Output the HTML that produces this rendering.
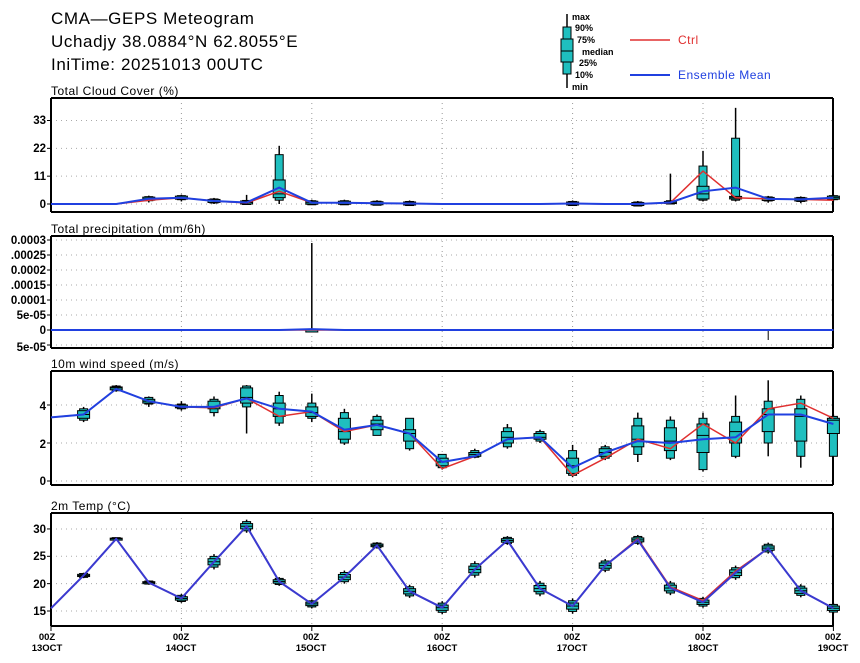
<!DOCTYPE html>
<html><head><meta charset="utf-8"><style>
html,body{margin:0;padding:0;background:#fff;}
svg{display:block;font-family:"Liberation Sans","DejaVu Sans",sans-serif;}
.t{font-size:17px;fill:#000;letter-spacing:0.6px;}
.s{font-size:12px;fill:#000;letter-spacing:0.5px;}
.a{font-size:11.5px;fill:#000;font-weight:bold;}
.l{font-size:9px;fill:#000;font-weight:bold;}
</style></head><body>
<svg id="g" width="860" height="663" viewBox="0 0 860 663" xmlns="http://www.w3.org/2000/svg">
<rect width="860" height="663" fill="#fff"/>
<text class="t" x="51" y="24">CMA—GEPS Meteogram</text>
<text class="t" x="51" y="47">Uchadjy 38.0884°N 62.8055°E</text>
<text class="t" x="51" y="70">IniTime: 20251013 00UTC</text>
<line x1="567" y1="14" x2="567" y2="88" stroke="#000" stroke-width="1.5"/>
<rect x="563" y="27" width="8" height="47" fill="#1fbfbf" stroke="#000"/>
<rect x="561" y="39" width="12" height="23" fill="#1fbfbf" stroke="#000"/>
<line x1="561" y1="51" x2="573" y2="51" stroke="#000"/>
<text class="l" x="572" y="20">max</text>
<text class="l" x="575" y="31">90%</text>
<text class="l" x="577" y="43">75%</text>
<text class="l" x="582" y="55">median</text>
<text class="l" x="579" y="66">25%</text>
<text class="l" x="575" y="78">10%</text>
<text class="l" x="572" y="90">min</text>
<line x1="630" y1="40" x2="670" y2="40" stroke="#e03030" stroke-width="1.5"/>
<text x="678" y="44" style="font-size:12px;fill:#e03030;letter-spacing:0.5px">Ctrl</text>
<line x1="630" y1="75" x2="670" y2="75" stroke="#2040e0" stroke-width="2"/>
<text x="678" y="79" style="font-size:12px;fill:#2040e0;letter-spacing:0.5px">Ensemble Mean</text>
<text class="s" x="51" y="95">Total Cloud Cover (%)</text>
<text class="s" x="51" y="233">Total precipitation (mm/6h)</text>
<text class="s" x="51" y="368">10m wind speed (m/s)</text>
<text class="s" x="51" y="510">2m Temp (°C)</text>
<g class="a" text-anchor="end">
<text x="46" y="124">33</text><text x="46" y="152">22</text><text x="46" y="180">11</text><text x="46" y="208">0</text>
<text x="46" y="244">0.0003</text><text x="46" y="259">.00025</text><text x="46" y="274">0.0002</text><text x="46" y="289">.00015</text><text x="46" y="304">0.0001</text><text x="46" y="319">5e-05</text><text x="46" y="334">0</text><text x="46" y="351">5e-05</text>
<text x="46" y="410">4</text><text x="46" y="448">2</text><text x="46" y="485">0</text>
<text x="46" y="533">30</text><text x="46" y="560">25</text><text x="46" y="588">20</text><text x="46" y="615">15</text>
</g>
<g class="l" text-anchor="middle" style="font-size:9.5px">
<text x="47" y="640">00Z</text><text x="47" y="651">13OCT</text>
<text x="181" y="640">00Z</text><text x="181" y="651">14OCT</text>
<text x="311" y="640">00Z</text><text x="311" y="651">15OCT</text>
<text x="442" y="640">00Z</text><text x="442" y="651">16OCT</text>
<text x="572" y="640">00Z</text><text x="572" y="651">17OCT</text>
<text x="703" y="640">00Z</text><text x="703" y="651">18OCT</text>
<text x="833" y="640">00Z</text><text x="833" y="651">19OCT</text>
</g>
<g id="dyn"></g>
</svg>
<script>
var NS="http://www.w3.org/2000/svg",G=document.getElementById("dyn");
function el(n,a){var e=document.createElementNS(NS,n);for(var k in a)e.setAttribute(k,a[k]);G.appendChild(e);return e;}
function X(i){return 51+32.6*i;}
var P=[{t:98,b:212,f:function(v){return 204-2.53*v},g:[33,22,11,0]},
{t:236,b:348,f:function(v){return 330-300000*v},g:[0.0003,0.00025,0.0002,0.00015,0.0001,0.00005,0,-0.00005]},
{t:371,b:485,f:function(v){return 481-19*v},g:[4,2,0]},
{t:513,b:626,f:function(v){return 611-5.47*(v-15)},g:[30,25,20,15]}];
P.forEach(function(p){
 p.g.forEach(function(v){var y=p.f(v);el("line",{x1:51,x2:833,y1:y,y2:y,stroke:"#aaa","stroke-dasharray":"1,4"});el("line",{x1:47,x2:51,y1:y,y2:y,stroke:"#000"});});
 for(var d=1;d<6;d++)el("line",{x1:X(4*d),x2:X(4*d),y1:p.t,y2:p.b,stroke:"#999","stroke-dasharray":"1,4"});
 el("line",{x1:51,x2:51,y1:p.t,y2:p.b,stroke:"#000","stroke-width":2});
 el("line",{x1:833,x2:833,y1:p.t,y2:p.b,stroke:"#000","stroke-width":2});
 el("line",{x1:51,x2:833,y1:p.t,y2:p.t,stroke:"#000","stroke-width":2});
 el("line",{x1:51,x2:833,y1:p.b,y2:p.b,stroke:"#000","stroke-width":2});
});
for(var d=0;d<7;d++)el("line",{x1:X(4*d),x2:X(4*d),y1:626,y2:631,stroke:"#000"});
function box(p,i,b){var f=P[p].f,x=X(i);
 el("line",{x1:x,x2:x,y1:f(b[0]),y2:f(b[6]),stroke:"#000","stroke-width":1.5});
 var y1=f(b[5]),y2=f(b[1]);el("rect",{x:x-4,y:y1,width:8,height:Math.max(y2-y1,2),fill:"#1fbfbf",stroke:"#000"});
 y1=f(b[4]);y2=f(b[2]);el("rect",{x:x-6,y:y1,width:12,height:Math.max(y2-y1,2),fill:"#1fbfbf",stroke:"#000"});
 el("line",{x1:x-6,x2:x+6,y1:f(b[3]),y2:f(b[3]),stroke:"#000"});}
function line(p,v,c,w){var s="";v.forEach(function(a,i){s+=(i?"L":"M")+X(i).toFixed(1)+","+P[p].f(a).toFixed(1);});el("path",{d:s,fill:"none",stroke:c,"stroke-width":w});}
function sm(v,d){return [v-d,v-d*.7,v-d*.4,v,v+d*.4,v+d*.7,v+d];}
var cc=[0,0,0,1.5,2.5,1.2,0.4,5,0.5,0.5,0.3,0.2,0,0,0,0,0.2,0,0,0.5,13,2.5,2,1.8,1.5];
var cm=[0,0,0,2.1,2.5,1.2,0.6,6.5,0.5,0.5,0.3,0.2,0,0,0,0,0.2,0,0,0.6,5,6.5,2,1.8,2.5];
for(var i=3;i<25;i++){if(i==7)box(0,i,[0,1.5,2.5,4,9.5,19.5,23]);else if(i==19)box(0,i,[0,0,0.2,0.5,1,1.3,12]);else if(i==20)box(0,i,[1,1.5,2,4,7,15,21]);else if(i==21)box(0,i,[1,1.5,2,2.5,3,26,38]);else if(i>11&&i<19&&i!=16&&i!=18)continue;else box(0,i,[Math.max(0,cm[i]-1.5),cm[i]-0.8,cm[i]-0.6,cm[i],cm[i]+0.6,cm[i]+0.8,cm[i]+(i==6?3:1.2)]);}
line(0,cc,"#e03030",1.5);line(0,cm,"#2040e0",2);
box(1,8,[0,0,0,0,0,0,0.00029]);el("line",{x1:X(22),x2:X(22),y1:330,y2:340,stroke:"#000"});
var pz=[];for(i=0;i<25;i++)pz.push(0);var pm=pz.slice();pm[8]=0.000003;var pc=pz.slice();
line(1,pc,"#e03030",1.5);line(1,pm,"#2040e0",2);
var wc=[3.35,3.5,4.85,4.2,3.9,3.85,4.35,3.4,3.65,2.6,2.95,2.5,0.65,1.3,2.2,2.3,0.3,1.2,2.2,1.7,3.0,2.0,3.8,4.1,3.3];
var wm=[3.35,3.5,4.85,4.2,3.9,3.9,4.35,3.8,3.65,2.7,2.95,2.5,1.0,1.3,2.2,2.3,0.7,1.5,2.1,2.0,2.2,2.3,3.5,3.5,3.0];
var wb=[null,[3.1,3.2,3.3,3.5,3.7,3.8,3.9],[4.7,4.75,4.8,4.9,4.95,5,5.05],[3.9,4.05,4.1,4.2,4.3,4.4,4.45],[3.7,3.8,3.85,3.9,4,4.05,4.2],[3.4,3.6,3.8,3.9,4.2,4.3,4.45],[2.5,3.9,4.1,4.4,4.9,5.0,5.05],[2.9,3.05,3.4,3.8,4.1,4.5,4.7],[3.1,3.3,3.4,3.6,3.9,4.1,4.6],[1.9,2.0,2.2,2.6,3.3,3.6,3.8],[2.4,2.4,2.7,3.0,3.2,3.4,3.5],[1.6,1.7,2.1,2.5,2.7,3.3,3.3],[0.6,0.7,0.8,1.0,1.2,1.4,1.4],[1.2,1.25,1.3,1.4,1.5,1.6,1.7],[1.7,1.8,2.0,2.3,2.6,2.8,3.0],[2.0,2.1,2.2,2.3,2.5,2.6,2.7],[0.2,0.3,0.4,0.8,1.2,1.6,1.9],[1.1,1.2,1.3,1.5,1.7,1.8,1.9],[1.0,1.4,1.8,2.2,2.9,3.3,3.6],[1.1,1.2,1.6,2.1,2.8,3.2,3.4],[0.5,0.6,1.5,2.4,3.0,3.3,3.6],[1.2,1.3,2.0,2.6,3.1,3.4,4.5],[1.3,2.0,2.6,3.5,3.8,4.2,5.3],[0.7,1.3,2.1,3.4,3.8,4.3,4.5],[1.3,1.3,2.5,3.2,3.3,3.4,3.5]];
for(i=1;i<25;i++)box(2,i,wb[i]);
line(2,wc,"#e03030",1.5);line(2,wm,"#2040e0",2);
var tc=[15.5,21.5,28.2,20.2,17.3,24,30.5,20.4,16.3,21.2,27,18.6,15.6,22.6,27.9,19.1,15.9,23.3,28.2,19.4,16.9,22.3,26.5,18.7,15.5];
var tm=[15.5,21.5,28.2,20.2,17.3,24,30.5,20.4,16.3,21.2,27,18.6,15.6,22.6,27.9,19.1,15.9,23.3,28.0,19.2,16.6,22.0,26.5,18.7,15.5];
var td=[0,0.5,0.3,0.4,0.8,1.4,1.2,0.8,0.8,1.2,0.6,1.2,1.2,1.5,0.8,1.4,1.4,1.2,0.9,1.3,1.0,1.3,1.0,1.2,1.0];
for(i=1;i<25;i++)box(3,i,sm(tm[i],td[i]));
line(3,tc,"#e03030",1.5);line(3,tm,"#3a3ad0",2);
</script>
</body></html>
